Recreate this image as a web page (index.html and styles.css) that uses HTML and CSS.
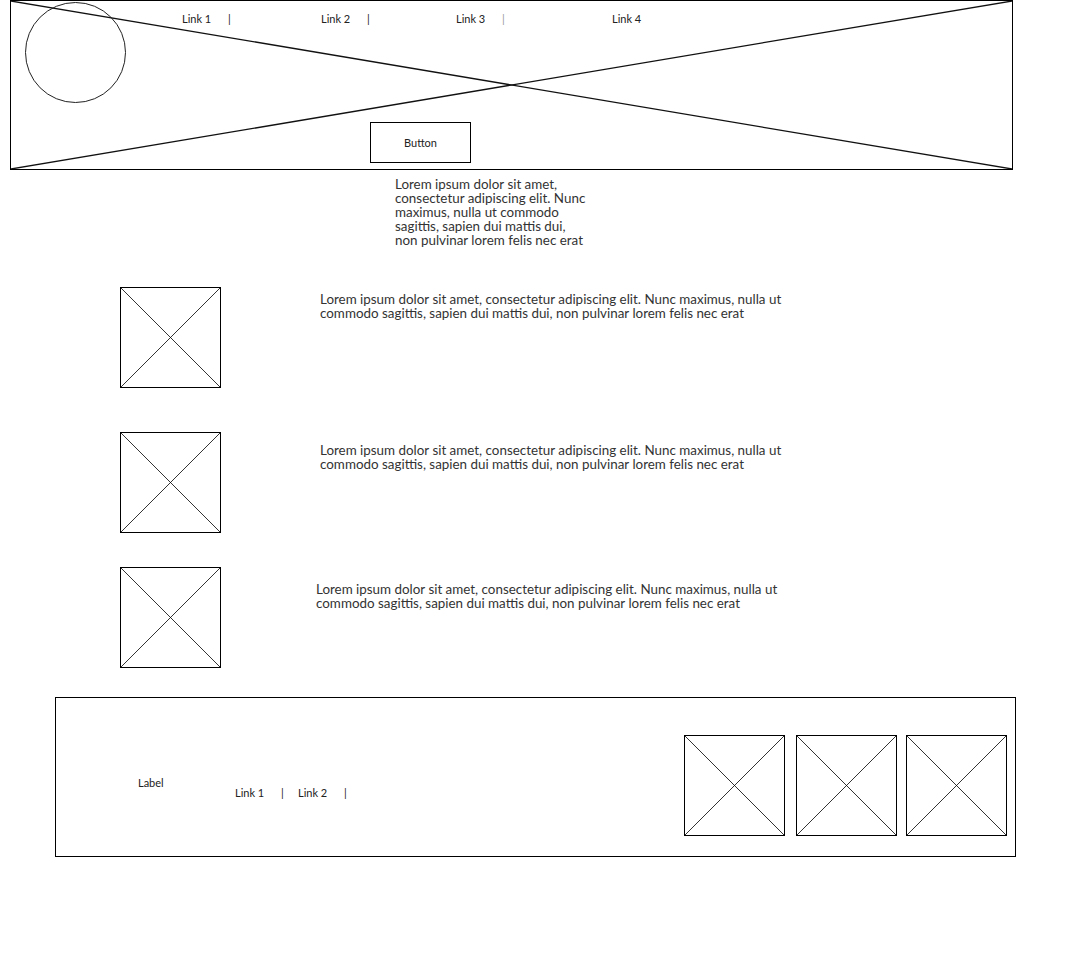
FILE: index.html
```html
<!DOCTYPE html>
<html lang="en">
<head>
    <meta charset="UTF-8">
    <title>Wireframe</title>
    <meta name="viewport" content="width=device-width, initial-scale=1">
    <link rel="stylesheet" href="styles.css">
</head>
<body>
<header class="hero">
    <svg class="hero-cross" viewBox="0 0 100 100" preserveAspectRatio="none">
        <line x1="0" y1="0" x2="100" y2="100"/>
        <line x1="0" y1="100" x2="100" y2="0"/>
    </svg>
    <div class="hero-top">
        <div class="logo"></div>
        <nav class="nav">
            <div class="nav-item"><a href="#">Link 1</a><span class="sep">|</span></div>
            <div class="nav-item"><a href="#">Link 2</a><span class="sep">|</span></div>
            <div class="nav-item"><a href="#">Link 3</a><span class="sep light">|</span></div>
            <div class="nav-item"><a href="#">Link 4</a></div>
        </nav>
    </div>
    <button class="btn">Button</button>
</header>

<p class="intro">Lorem ipsum dolor sit amet, consectetur adipiscing elit. Nunc maximus, nulla ut commodo sagittis, sapien dui mattis dui, non pulvinar lorem felis nec erat</p>

<section class="features">
    <div class="feature first">
        <svg class="ph" viewBox="0 0 101 101"><rect x="0.5" y="0.5" width="100" height="100"/><line x1="0" y1="0" x2="101" y2="101"/><line x1="101" y1="0" x2="0" y2="101"/></svg>
        <p>Lorem ipsum dolor sit amet, consectetur adipiscing elit. Nunc maximus, nulla ut commodo sagittis, sapien dui mattis dui, non pulvinar lorem felis nec erat</p>
    </div>
    <div class="feature second">
        <svg class="ph" viewBox="0 0 101 101"><rect x="0.5" y="0.5" width="100" height="100"/><line x1="0" y1="0" x2="101" y2="101"/><line x1="101" y1="0" x2="0" y2="101"/></svg>
        <p>Lorem ipsum dolor sit amet, consectetur adipiscing elit. Nunc maximus, nulla ut commodo sagittis, sapien dui mattis dui, non pulvinar lorem felis nec erat</p>
    </div>
    <div class="feature third">
        <svg class="ph" viewBox="0 0 101 101"><rect x="0.5" y="0.5" width="100" height="100"/><line x1="0" y1="0" x2="101" y2="101"/><line x1="101" y1="0" x2="0" y2="101"/></svg>
        <p>Lorem ipsum dolor sit amet, consectetur adipiscing elit. Nunc maximus, nulla ut commodo sagittis, sapien dui mattis dui, non pulvinar lorem felis nec erat</p>
    </div>
</section>

<footer class="footer">
    <div class="footer-label">Label</div>
    <nav class="footer-nav">
        <div class="nav-item"><a href="#">Link 1</a><span class="sep">|</span></div>
        <div class="nav-item"><a href="#">Link 2</a><span class="sep">|</span></div>
    </nav>
    <div class="gallery">
        <svg class="ph" viewBox="0 0 101 101"><rect x="0.5" y="0.5" width="100" height="100"/><line x1="0" y1="0" x2="101" y2="101"/><line x1="101" y1="0" x2="0" y2="101"/></svg>
        <svg class="ph" viewBox="0 0 101 101"><rect x="0.5" y="0.5" width="100" height="100"/><line x1="0" y1="0" x2="101" y2="101"/><line x1="101" y1="0" x2="0" y2="101"/></svg>
        <svg class="ph" viewBox="0 0 101 101"><rect x="0.5" y="0.5" width="100" height="100"/><line x1="0" y1="0" x2="101" y2="101"/><line x1="101" y1="0" x2="0" y2="101"/></svg>
    </div>
</footer>
</body>
</html>
```

FILE: styles.css
```css
body { margin: 0; background: #fff; font-family: Lato, "Open Sans", sans-serif; color: #333; }
a { color: #222; text-decoration: none; }
p { margin: 0; }

/* hero / header placeholder */
.hero { position: relative; box-sizing: border-box; width: 1003px; height: 170px; margin-left: 10px; border: 1px solid #000; }
.hero-cross { position: absolute; top: 0; left: 0; width: 100%; height: 100%; }
.hero-cross line { stroke: #111; stroke-width: 1.3px; vector-effect: non-scaling-stroke; }
.hero-top { position: relative; display: flex; align-items: flex-start; }
.logo { box-sizing: border-box; width: 101px; height: 101px; margin: 1px 0 0 14px; border: 1px solid #222; border-radius: 50%; }

.nav { display: grid; grid-template-columns: 139px 135px 156px auto; margin: 11px 0 0 56px; font-size: 11px; line-height: 14px; }
.nav-item { display: flex; }
.nav-item a { width: 46px; }
.sep { color: #222; }
.sep.light { color: #999; }

.btn { position: relative; display: block; box-sizing: border-box; width: 101px; height: 41px; margin: 19px 0 0 359px; padding: 0; border: 1px solid #000; background: #fff; font-family: inherit; font-size: 11px; color: #222; }

/* intro text */
.intro { width: 194px; margin: 7px 0 0 395px; font-size: 13.4px; line-height: 14px; }

/* feature rows */
.features { padding-left: 120px; }
.feature { display: flex; align-items: flex-start; }
.feature p { width: 490px; margin-left: 99px; font-size: 13.4px; line-height: 14px; }
.feature.first { margin-top: 40px; }
.feature.first p { padding-top: 5px; }
.feature.second { margin-top: 44px; }
.feature.second p { padding-top: 11px; }
.feature.third { margin-top: 34px; }
.feature.third p { margin-left: 95px; padding-top: 15px; }

.ph { display: block; flex: none; width: 101px; height: 101px; }
.ph rect { fill: none; stroke: #000; stroke-width: 1px; }
.ph line { stroke: #000; stroke-width: 0.8px; }

/* footer */
.footer { box-sizing: border-box; display: flex; align-items: flex-start; width: 961px; height: 160px; margin: 29px 0 0 55px; border: 1px solid #000; font-size: 11px; line-height: 14px; color: #222; }
.footer-label { width: 97px; margin: 78px 0 0 82px; }
.footer-nav { display: grid; grid-template-columns: 63px 63px; margin-top: 88px; }
.gallery { display: flex; margin: 37px 8px 0 auto; }
.gallery .ph:nth-child(2) { margin-left: 11px; }
.gallery .ph:nth-child(3) { margin-left: 9px; }
```
